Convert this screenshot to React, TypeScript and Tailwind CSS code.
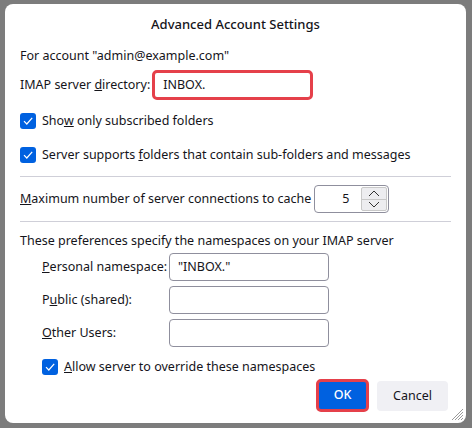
import React from "react";

const font = { fontFamily: '"Noto Sans", "Open Sans", sans-serif' };

function Check() {
  return (
    <span className="flex h-4 w-4 shrink-0 items-center justify-center rounded-[3px] bg-[#0061e0]">
      <svg width="12" height="12" viewBox="0 0 12 12" fill="none">
        <path d="M2 6.2 L4.8 9 L10.2 2.8" stroke="white" strokeWidth="1.2" />
      </svg>
    </span>
  );
}

function Field({ value = "", className = "" }: { value?: string; className?: string }) {
  return (
    <div
      className={`flex h-[28px] w-[160px] items-center rounded-[4px] border border-[#8f8f9d] bg-white px-[8px] ${className}`}
    >
      {value}
    </div>
  );
}

export default function App() {
  return (
    <div
      className="h-[428px] w-[472px] bg-[#7c7c7c] pl-[5px] pt-[4px] text-[12.5px] leading-none text-[#15141a]"
      style={font}
    >
      <div className="relative flex h-[419px] w-[461px] flex-col whitespace-nowrap rounded-[8px] bg-white px-[15px]">
        <div className="mt-[9px] text-center text-[13px] font-medium leading-[22px]">
          Advanced Account Settings
        </div>

        <div className="mt-[11px] leading-[20px]">For account "admin@example.com"</div>

        <div className="mt-[4px] flex items-center">
          <span>
            IMAP server <u>d</u>irectory:
          </span>
          <div className="ml-[2px] flex h-[30px] w-[161px] items-center rounded-[5px] border-[3px] border-[#e5404a] bg-white px-[8px]">
            INBOX.
          </div>
        </div>

        <div className="mt-[13px] flex items-center gap-[6px]">
          <Check />
          <span>
            Sho<u>w</u> only subscribed folders
          </span>
        </div>

        <div className="mt-[18px] flex items-center gap-[6px]">
          <Check />
          <span>
            Server supports <u>f</u>olders that contain sub-folders and messages
          </span>
        </div>

        <div className="mt-[13px] h-px bg-[#cfcfd8]" />

        <div className="mt-[8px] flex items-center">
          <span>
            <u>M</u>aximum number of server connections to cache
          </span>
          <div className="ml-[3px] flex h-[28px] w-[75px] items-center rounded-[4px] border border-[#8f8f9d] bg-white">
            <span className="flex-1 pr-[12px] text-right">5</span>
            <div className="mr-[1px] flex h-[24px] w-[26px] flex-col overflow-hidden rounded-[2px] border border-[#c8c8c8] bg-[#ededf0]">
              <div className="flex flex-1 items-center justify-center border-b border-[#c8c8c8]">
                <svg width="12" height="7" viewBox="0 0 12 7" fill="none">
                  <path d="M1 6 L6 1 L11 6" stroke="#333" strokeWidth="1" />
                </svg>
              </div>
              <div className="flex flex-1 items-center justify-center">
                <svg width="12" height="7" viewBox="0 0 12 7" fill="none">
                  <path d="M1 1 L6 6 L11 1" stroke="#333" strokeWidth="1" />
                </svg>
              </div>
            </div>
          </div>
        </div>

        <div className="mt-[8px] h-px bg-[#cfcfd8]" />

        <div className="mt-[11px] leading-[16px]">These preferences specify the namespaces on your IMAP server</div>

        <div className="mt-[4px] grid grid-cols-[127px_160px] items-center gap-y-[5px] pl-[22px]">
          <span>
            <u>P</u>ersonal namespace:
          </span>
          <Field value={'"INBOX."'} />
          <span>
            P<u>u</u>blic (shared):
          </span>
          <Field />
          <span>
            <u>O</u>ther Users:
          </span>
          <Field />
        </div>

        <div className="mt-[12px] flex items-center gap-[6px] pl-[22px]">
          <Check />
          <span>
            <u>A</u>llow server to override these namespaces
          </span>
        </div>

        <div className="mt-[4px] flex justify-end gap-[8px] pr-[3px]">
          <div className="flex h-[33px] w-[53px] items-center justify-center rounded-[5px] border-[3px] border-[#e5404a] bg-[#0061e0] font-medium text-white">
            OK
          </div>
          <div className="mt-[2px] flex h-[30px] w-[71px] items-center justify-center rounded-[4px] bg-[#f0f0f4]">
            Cancel
          </div>
        </div>

        <svg
          className="absolute bottom-[2px] right-[2px]"
          width="12"
          height="12"
          viewBox="0 0 12 12"
          fill="none"
        >
          <path d="M11 3 L3 11 M11 6 L6 11 M11 9 L9 11 M11 0 L0 11" stroke="#9a9a9a" strokeWidth="1" />
        </svg>
      </div>
    </div>
  );
}
